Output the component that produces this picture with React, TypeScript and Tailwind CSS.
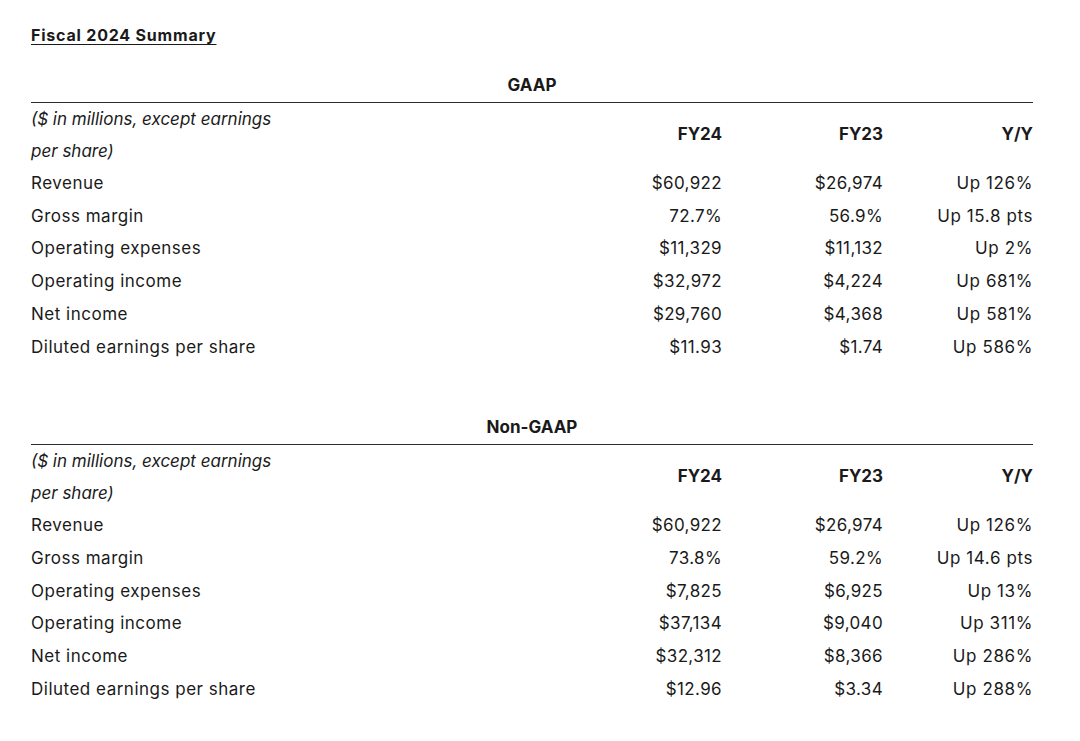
import { FC } from "react"

type Row = {
	label: string
	fy24: string
	fy23: string
	yy: string
}

const gaapRows: Row[] = [
	{ label: "Revenue", fy24: "$60,922", fy23: "$26,974", yy: "Up 126%" },
	{ label: "Gross margin", fy24: "72.7%", fy23: "56.9%", yy: "Up 15.8 pts" },
	{ label: "Operating expenses", fy24: "$11,329", fy23: "$11,132", yy: "Up 2%" },
	{ label: "Operating income", fy24: "$32,972", fy23: "$4,224", yy: "Up 681%" },
	{ label: "Net income", fy24: "$29,760", fy23: "$4,368", yy: "Up 581%" },
	{ label: "Diluted earnings per share", fy24: "$11.93", fy23: "$1.74", yy: "Up 586%" },
]

const nonGaapRows: Row[] = [
	{ label: "Revenue", fy24: "$60,922", fy23: "$26,974", yy: "Up 126%" },
	{ label: "Gross margin", fy24: "73.8%", fy23: "59.2%", yy: "Up 14.6 pts" },
	{ label: "Operating expenses", fy24: "$7,825", fy23: "$6,925", yy: "Up 13%" },
	{ label: "Operating income", fy24: "$37,134", fy23: "$9,040", yy: "Up 311%" },
	{ label: "Net income", fy24: "$32,312", fy23: "$8,366", yy: "Up 286%" },
	{ label: "Diluted earnings per share", fy24: "$12.96", fy23: "$3.34", yy: "Up 288%" },
]

const SummaryTable: FC<{ heading: string; rows: Row[] }> = ({ heading, rows }) => (
	<div>
		<div className="pb-[6px] text-center text-[17px] font-bold leading-[22px]">{heading}</div>
		<div className="grid grid-cols-[530px_161px_161px_150px] border-t border-[#2b2b2b]">
			<div className="text-[17px] italic leading-[32px]">
				($ in millions, except earnings
				<br />
				per share)
			</div>
			<div className="flex items-center justify-end text-[17px] font-bold">FY24</div>
			<div className="flex items-center justify-end text-[17px] font-bold">FY23</div>
			<div className="flex items-center justify-end text-[17px] font-bold">Y/Y</div>
			{rows.map((r) => (
				<div key={r.label} className="contents">
					<div className="text-[17px] leading-[32.7px] tracking-[0.5px]">{r.label}</div>
					<div className="text-right text-[17px] leading-[32.7px] tracking-[0.35px]">{r.fy24}</div>
					<div className="text-right text-[17px] leading-[32.7px] tracking-[0.35px]">{r.fy23}</div>
					<div className="text-right text-[17px] leading-[32.7px] tracking-[0.6px]">{r.yy}</div>
				</div>
			))}
		</div>
	</div>
)

export default function App() {
	return (
		<div
			className="min-h-[741px] w-[1080px] bg-white px-[31px] pt-[24px] text-[#1a1a1a]"
			style={{ fontFamily: "Inter, 'Noto Sans', sans-serif" }}
		>
			<div className="text-[16px] font-bold leading-[22px] tracking-[0.8px] underline underline-offset-[3px]">
				Fiscal 2024 Summary
			</div>
			<div className="mt-[28px] w-[1002px]">
				<SummaryTable heading="GAAP" rows={gaapRows} />
			</div>
			<div className="mt-[53px] w-[1002px]">
				<SummaryTable heading="Non-GAAP" rows={nonGaapRows} />
			</div>
		</div>
	)
}
